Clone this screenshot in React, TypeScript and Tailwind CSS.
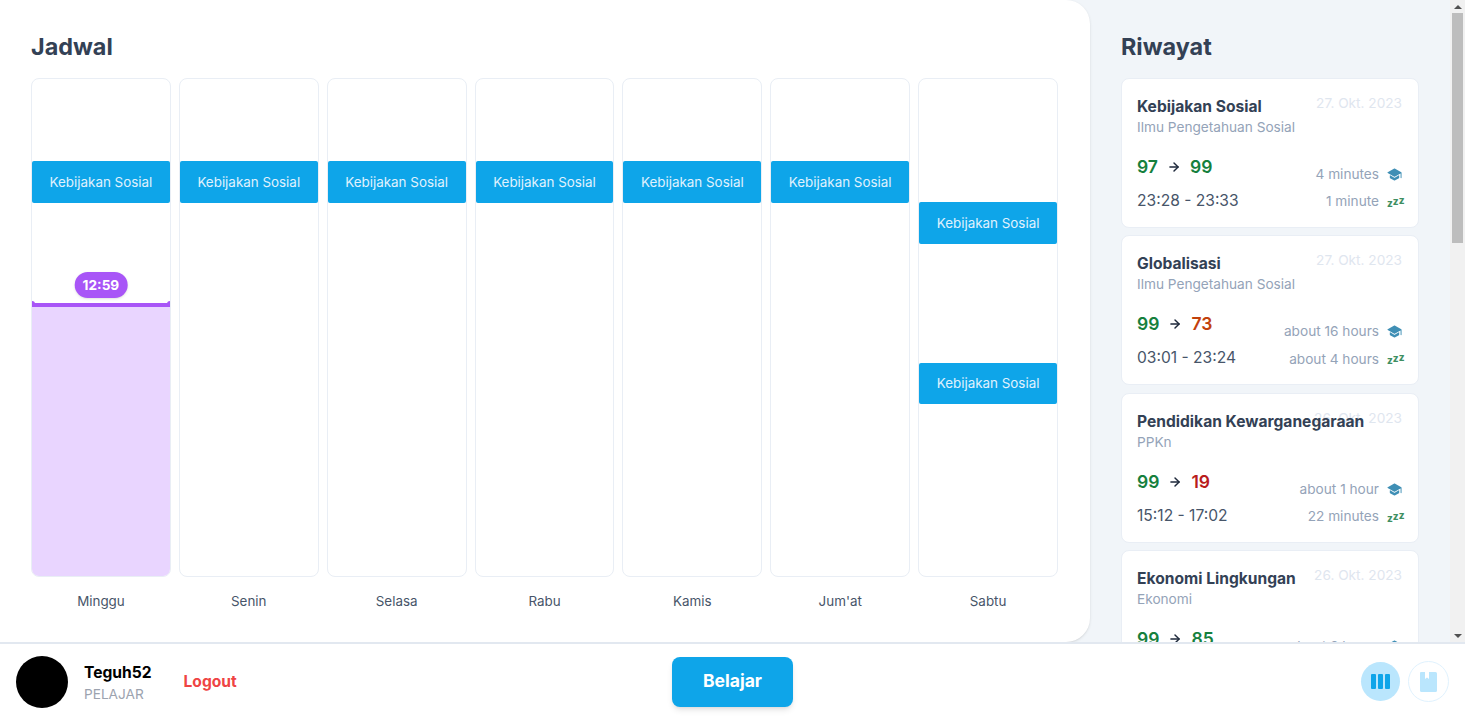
import { IoSchool } from 'react-icons/io5'
import { ArrowRight } from 'lucide-react'

const days = [
  { name: 'Minggu', slots: [83], now: true },
  { name: 'Senin', slots: [83] },
  { name: 'Selasa', slots: [83] },
  { name: 'Rabu', slots: [83] },
  { name: 'Kamis', slots: [83] },
  { name: "Jum'at", slots: [83] },
  { name: 'Sabtu', slots: [124, 119] },
]

const history = [
  { title: 'Kebijakan Sosial', subject: 'Ilmu Pengetahuan Sosial', date: '27. Okt. 2023', from: 97, to: 99, toColor: 'text-[#15803d]', time: '23:28 - 23:33', study: '4 minutes', rest: '1 minute' },
  { title: 'Globalisasi', subject: 'Ilmu Pengetahuan Sosial', date: '27. Okt. 2023', from: 99, to: 73, toColor: 'text-[#c2410c]', time: '03:01 - 23:24', study: 'about 16 hours', rest: 'about 4 hours' },
  { title: 'Pendidikan Kewarganegaraan', subject: 'PPKn', date: '26. Okt. 2023', from: 99, to: 19, toColor: 'text-[#b91c1c]', time: '15:12 - 17:02', study: 'about 1 hour', rest: '22 minutes' },
  { title: 'Ekonomi Lingkungan', subject: 'Ekonomi', date: '26. Okt. 2023', from: 99, to: 85, toColor: 'text-[#15803d]', time: '13:40 - 15:51', study: 'about 2 hours', rest: '8 minutes' },
]

function Slot({ top }: { top: number }) {
  return (
    <div style={{ marginTop: top }} className="flex h-[41.5px] shrink-0 items-center justify-center rounded-[2px] bg-[#0ea5e9] text-[13.4px] text-[#e0f2fe]">
      Kebijakan Sosial
    </div>
  )
}

function DayColumn({ day }: { day: (typeof days)[number] }) {
  return (
    <div className="flex flex-col items-stretch">
      <div className="relative flex h-[499px] flex-col overflow-hidden rounded-lg border border-[#e9eef5]">
        {day.slots.map((top, i) => (
          <Slot key={i} top={top - (i === 0 ? 1 : 0)} />
        ))}
        {day.now && (
          <>
            <div className="mt-[100px] h-[4px] shrink-0 bg-[#a855f7]" />
            <div className="flex-1 bg-[#e9d5ff]" />
            <div className="absolute left-1/2 top-[193px] -translate-x-1/2 rounded-full bg-[#a855f7] px-2 py-[3px] text-[13.65px] font-bold text-white shadow">
              12:59
            </div>
            <div className="absolute left-0 top-[222px] h-[6px] w-[3px] rounded-r-sm bg-[#a855f7]" />
            <div className="absolute right-0 top-[222px] h-[6px] w-[3px] rounded-l-sm bg-[#a855f7]" />
          </>
        )}
      </div>
      <div className="mt-[14px] text-center text-[13.4px] text-[#475569]">{day.name}</div>
    </div>
  )
}

function Zzz() {
  return (
    <div className="ml-[8px] flex w-[15px] items-center justify-between text-[10px] font-extrabold leading-none text-[#3f8f62]">
      <span className="translate-y-[1px]">z</span>
      <span className="-translate-y-[1px]">z</span>
      <span className="-translate-y-[2px]">z</span>
    </div>
  )
}

function HistoryCard({ item }: { item: (typeof history)[number] }) {
  return (
    <div className="relative h-[149.7px] shrink-0 rounded-lg border border-[#e9eef5] bg-white pl-[15px] pr-[16px] pt-[16px]">
      <div className="absolute right-[16px] top-[14px] text-[13.65px] text-[#dfe6ef]">{item.date}</div>
      <div className="relative text-[15.6px] font-bold leading-6 text-[#334155]">{item.title}</div>
      <div className="-mt-[2px] text-[13.65px] leading-5 text-[#94a3b8]">{item.subject}</div>
      <div className="mt-[12px] flex items-center justify-between">
        <div className="flex items-center text-[17.55px] font-semibold text-[#15803d]">
          <span>{item.from}</span>
          <ArrowRight size={14} strokeWidth={2.5} className="mx-[9px] text-[#1e293b]" />
          <span className={item.toColor}>{item.to}</span>
        </div>
        <div className="mt-[15px] flex items-center text-[13.65px] text-[#94a3b8]">
          {item.study}
          <IoSchool size={15} className="ml-[8px] text-[#3f8fb5]" />
        </div>
      </div>
      <div className="mt-[4px] flex items-center justify-between">
        <div className="text-[15.6px] text-[#475569]">{item.time}</div>
        <div className="mt-[3px] flex items-center text-[13.65px] text-[#94a3b8]">
          {item.rest}
          <Zzz />
        </div>
      </div>
    </div>
  )
}

function Scrollbar() {
  return (
    <div className="flex w-[15px] shrink-0 flex-col bg-[#f1f1f1]">
      <div className="flex h-[13px] shrink-0 items-center justify-center">
        <div className="h-0 w-0 border-x-[4px] border-b-[4px] border-x-transparent border-b-[#505050]" />
      </div>
      <div className="mx-[2px] h-[230px] shrink-0 bg-[#bdbdbd]" />
      <div className="flex-1" />
      <div className="flex h-[13px] shrink-0 items-center justify-center">
        <div className="h-0 w-0 border-x-[4px] border-t-[4px] border-x-transparent border-t-[#505050]" />
      </div>
    </div>
  )
}

export default function App() {
  return (
    <div className="flex h-screen flex-col overflow-hidden bg-white font-['Inter',sans-serif]">
      <div className="flex min-h-0 flex-1 bg-[#f1f5f9]">
        <div className="relative z-10 w-[1090px] shrink-0 rounded-r-3xl bg-white pl-[31px] pr-[32px] pt-[31px] shadow">
          <h2 className="text-[23.4px] font-bold leading-8 text-[#334155]">Jadwal</h2>
          <div className="mt-[15px] grid grid-cols-7 gap-2">
            {days.map((d) => (
              <DayColumn key={d.name} day={d} />
            ))}
          </div>
        </div>
        <div className="flex min-w-0 flex-1">
          <div className="min-w-0 flex-1 overflow-hidden px-[31px] pt-[31px]">
            <h2 className="text-[23.4px] font-bold leading-8 text-[#334155]">Riwayat</h2>
            <div className="mt-[15px] flex flex-col gap-[7.8px]">
              {history.map((h) => (
                <HistoryCard key={h.title} item={h} />
              ))}
            </div>
          </div>
          <Scrollbar />
        </div>
      </div>
      <div className="relative z-20 flex h-[78px] shrink-0 items-center justify-between border-t-2 border-[#e2e8f0] bg-white px-4 pb-[1px]">
        <div className="flex w-[300px] items-center">
          <div className="h-[52px] w-[52px] rounded-full bg-black" />
          <div className="ml-4">
            <div className="mt-[1px] text-[15.6px] font-bold leading-6 text-black">Teguh52</div>
            <div className="-mt-[1px] text-[13.65px] leading-5 text-[#9ca3af]">PELAJAR</div>
          </div>
          <button className="ml-[32px] text-[15.6px] font-bold text-[#ef4444]">Logout</button>
        </div>
        <button className="h-[50px] w-[121px] rounded-lg bg-[#0ea5e9] text-[17.55px] font-bold text-white shadow-md">Belajar</button>
        <div className="flex w-[300px] items-center justify-end gap-2">
          <div className="flex h-[39px] w-[39px] items-center justify-center rounded-full bg-[#bae6fd]">
            <svg width="20" height="15" viewBox="0 0 20 15" className="fill-[#0ea5e9]">
              <rect x="0" y="0" width="5" height="15" rx="1" />
              <rect x="7" y="0" width="5" height="15" rx="1" />
              <rect x="14" y="0" width="5" height="15" rx="1" />
            </svg>
          </div>
          <div className="flex h-[41px] w-[41px] items-center justify-center rounded-full border border-[#e0f2fe]">
            <svg width="17" height="20" viewBox="0 0 17 20" className="fill-[#bae6fd]">
              <path d="M1 0H5V7L7 5.5L9 7V0H15.5A1.5 1.5 0 0 1 17 1.5V18.5A1.5 1.5 0 0 1 15.5 20H1.5A1.5 1.5 0 0 1 0 18.5V1A1 1 0 0 1 1 0Z" />
            </svg>
          </div>
        </div>
      </div>
    </div>
  )
}
